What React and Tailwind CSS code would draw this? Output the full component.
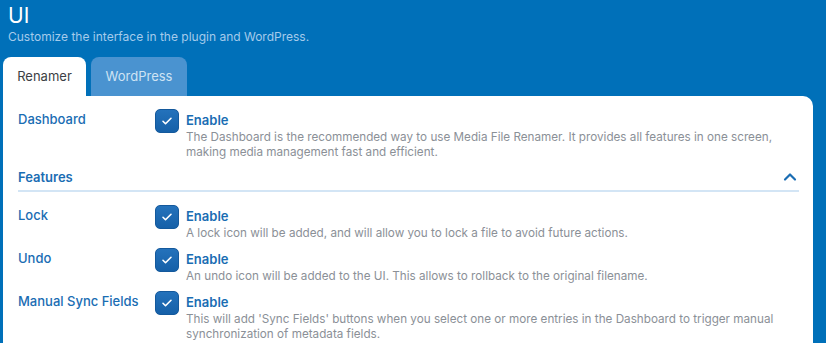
import { ChevronUp } from "lucide-react";

function Checkbox() {
  return (
    <div className="w-[24px] h-[24px] shrink-0 rounded-[5px] bg-gradient-to-b from-[#2472bb] to-[#1560a8] border border-[#14599c] flex items-center justify-center">
      <svg width="12" height="12" viewBox="0 0 24 24" fill="none" stroke="white" strokeWidth="3.2" strokeLinecap="round" strokeLinejoin="round">
        <path d="M4 12.5l5 5L20 6.5" />
      </svg>
    </div>
  );
}

function OptionRow({ label, children, className = "" }) {
  return (
    <div className={`flex ${className}`}>
      <div className="w-[137px] shrink-0 pt-[2px] text-[13px] leading-[16px] font-medium text-[#1a6db3]">
        {label}
      </div>
      <Checkbox />
      <div className="ml-[7px] pt-[3px]">
        <div className="text-[13px] leading-[16px] font-semibold text-[#1a6db3]">Enable</div>
        <div className="mt-[2px] text-[11.7px] leading-[15px] text-[#8b9097]">{children}</div>
      </div>
    </div>
  );
}

export default function App() {
  return (
    <div className="w-[826px] h-[343px] overflow-hidden bg-[#0070b9] font-['Inter',sans-serif]">
      <div className="px-[8px] pt-[3px]">
        <h1 className="text-[21px] leading-[26px] text-white">UI</h1>
        <p className="text-[12px] leading-[15px] text-[#a5cbeb]">
          Customize the interface in the plugin and WordPress.
        </p>
      </div>
      <div className="flex gap-[5px] ml-[3px] mt-[13px]">
        <div className="w-[83px] h-[39px] bg-white rounded-t-[8px] flex items-center justify-center text-[13px] text-[#3c3f44]">
          Renamer
        </div>
        <div className="w-[96px] h-[39px] bg-[#4a93d0] rounded-t-[8px] flex items-center justify-center text-[13px] text-[#cfe3f4]">
          WordPress
        </div>
      </div>
      <div className="ml-[3px] w-[810px] h-[260px] bg-white rounded-tr-[10px] pl-[15px] pr-[14px] pt-[13px]">
        <OptionRow label="Dashboard">
          The Dashboard is the recommended way to use Media File Renamer. It provides all features in one screen,
          <br />
          making media management fast and efficient.
        </OptionRow>
        <div className="mt-[7px] flex items-center justify-between pb-[3px] border-b-2 border-[#d3e5f5]">
          <span className="text-[13px] leading-[16px] font-semibold text-[#1a6db3]">Features</span>
          <ChevronUp size={20} strokeWidth={2.6} className="text-[#1a6db3] -mr-[1px]" />
        </div>
        <OptionRow label="Lock" className="mt-[13px]">
          A lock icon will be added, and will allow you to lock a file to avoid future actions.
        </OptionRow>
        <OptionRow label="Undo" className="mt-[7px]">
          An undo icon will be added to the UI. This allows to rollback to the original filename.
        </OptionRow>
        <OptionRow label="Manual Sync Fields" className="mt-[7px]">
          This will add 'Sync Fields' buttons when you select one or more entries in the Dashboard to trigger manual
          <br />
          synchronization of metadata fields.
        </OptionRow>
      </div>
    </div>
  );
}
